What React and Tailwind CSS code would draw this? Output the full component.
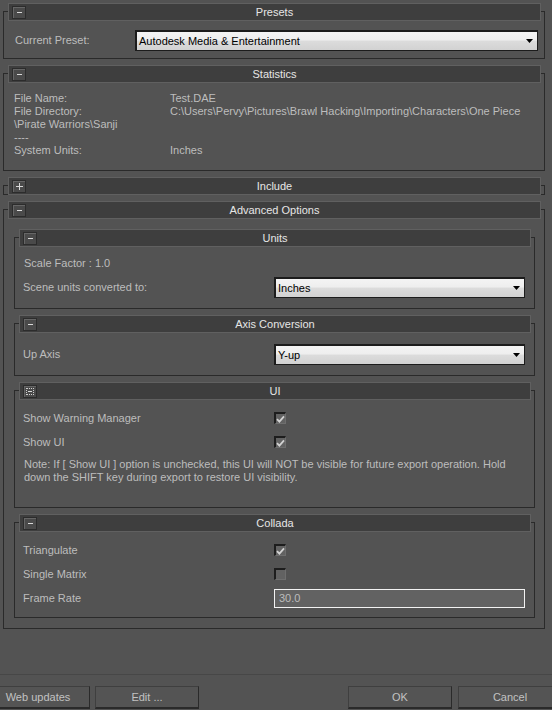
import React from "react";

function HeaderBtn({ kind }) {
  return (
    <div className="ml-[3px] flex h-[13px] w-[14px] shrink-0 items-center justify-center border border-[#2c2c2c] bg-[#4a4a4a] shadow-[inset_1px_1px_0_#666]">
      {kind === "focus" ? (
        <div className="flex h-[7px] w-[8px] items-center justify-center border border-dotted border-[#cfcfcf]">
          <div className="h-px w-[4px] bg-[#d8d8d8]" />
        </div>
      ) : kind === "plus" ? (
        <div className="relative flex h-[7px] w-[7px] items-center justify-center">
          <div className="h-px w-[7px] bg-[#d8d8d8]" />
          <div className="absolute left-[3px] top-0 h-[7px] w-px bg-[#d8d8d8]" />
        </div>
      ) : (
        <div className="h-px w-[5px] bg-[#d8d8d8]" />
      )}
    </div>
  );
}

function Header({ title, kind }) {
  return (
    <div className="-mt-[9px] ml-[4px] mr-[3px] flex h-[18px] items-center border border-[#606060] bg-[#3e3e3e]">
      <HeaderBtn kind={kind} />
      <div className="mr-[17px] flex-1 text-center text-[11px] leading-[13px] text-[#e6e6e6]">
        {title}
      </div>
    </div>
  );
}

function Arrow() {
  return (
    <svg width="7" height="4" viewBox="0 0 7 4" className="mr-[4px] shrink-0">
      <path d="M0 0H7L3.5 4Z" fill="#000" />
    </svg>
  );
}

function Dropdown({ value, w }) {
  return (
    <div
      className={
        "flex h-[21px] shrink-0 items-center justify-between border border-[#1c1c1c] border-t-2 border-l-2 bg-[linear-gradient(to_bottom,#f4f4f4_0%,#eeeeee_45%,#dcdcdc_50%,#d2d2d2_100%)] pl-[2px] text-[11px] text-black " +
        w
      }
    >
      <span>{value}</span>
      <Arrow />
    </div>
  );
}

function Check({ checked }) {
  return (
    <div className="flex h-[12px] w-[12px] shrink-0 items-center justify-center border-t-2 border-l-2 border-r border-b border-t-[#1d1d1d] border-l-[#1d1d1d] border-r-[#6e6e6e] border-b-[#6e6e6e] bg-[#626262]">
      {checked && (
        <svg width="9" height="8" viewBox="0 0 9 8">
          <path d="M1 4.2L3.4 6.6L8 1.4" fill="none" stroke="#d2d2d2" strokeWidth="1.8" />
        </svg>
      )}
    </div>
  );
}

function Row({ label, children }) {
  return (
    <div className="flex h-[24px] items-center">
      <div className="w-[259px] shrink-0 pl-[8px]">{label}</div>
      {children}
    </div>
  );
}

function FooterBtn({ label }) {
  return (
    <div className="flex h-[23px] w-[104px] items-center justify-center border border-t-[#3f3f3f] border-l-[#3f3f3f] border-r-[#2a2a2a] border-b-2 border-b-[#2a2a2a] bg-[#545454] text-[11px] text-[#c2c2c2]">
      {label}
    </div>
  );
}

export default function App() {
  return (
    <div className="flex h-[710px] w-[552px] flex-col overflow-hidden bg-[#535353] font-['Liberation_Sans',Arial,sans-serif] text-[11px] leading-[13px] text-[#bdbdbd]">
      {/* Presets */}
      <div className="ml-[3px] mt-[11px] w-[542px] border border-[#2a2a2a]">
        <Header title="Presets" kind="minus" />
        <div className="flex items-center pt-[9px] pb-[7px]">
          <div className="w-[131px] shrink-0 pl-[11px]">Current Preset:</div>
          <Dropdown value="Autodesk Media & Entertainment" w="w-[403px]" />
        </div>
      </div>

      {/* Statistics */}
      <div className="ml-[3px] mt-[14px] w-[542px] border border-[#2a2a2a]">
        <Header title="Statistics" kind="minus" />
        <div className="grid grid-cols-[166px_1fr] pt-[9px] pb-[13px]">
          <div className="pl-[10px]">File Name:</div>
          <div>Test.DAE</div>
          <div className="pl-[10px]">File Directory:</div>
          <div className="whitespace-nowrap">
            C:\Users\Pervy\Pictures\Brawl Hacking\Importing\Characters\One Piece
          </div>
          <div className="col-span-2 pl-[10px]">\Pirate Warriors\Sanji</div>
          <div className="col-span-2 pl-[10px]">----</div>
          <div className="pl-[10px]">System Units:</div>
          <div>Inches</div>
        </div>
      </div>

      {/* Include (collapsed) */}
      <div className="ml-[3px] mt-[14px] w-[542px] border border-[#2a2a2a]">
        <div className="-mb-px">
          <Header title="Include" kind="plus" />
        </div>
      </div>

      {/* Advanced Options */}
      <div className="ml-[3px] mt-[14px] w-[542px] border border-[#2a2a2a] pb-[10px]">
        <Header title="Advanced Options" kind="minus" />

        {/* Units */}
        <div className="ml-[10px] mt-[18px] w-[521px] border border-[#2a2a2a]">
          <Header title="Units" kind="minus" />
          <div className="pt-[10px] pb-[10px]">
            <div className="pl-[9px]">Scale Factor : 1.0</div>
            <div className="mt-[7px] flex items-center">
              <div className="w-[259px] shrink-0 pl-[8px]">Scene units converted to:</div>
              <Dropdown value="Inches" w="w-[251px]" />
            </div>
          </div>
        </div>

        {/* Axis Conversion */}
        <div className="ml-[10px] mt-[14px] w-[521px] border border-[#2a2a2a]">
          <Header title="Axis Conversion" kind="minus" />
          <div className="flex items-center pt-[11px] pb-[10px]">
            <div className="w-[259px] shrink-0 pl-[8px]">Up Axis</div>
            <Dropdown value="Y-up" w="w-[251px]" />
          </div>
        </div>

        {/* UI */}
        <div className="ml-[10px] mt-[14px] w-[521px] border border-[#2a2a2a]">
          <Header title="UI" kind="focus" />
          <div className="pt-[6px] pb-[23px]">
            <Row label="Show Warning Manager">
              <Check checked />
            </Row>
            <Row label="Show UI">
              <Check checked />
            </Row>
            <div className="mt-[4px] pl-[9px]">
              Note: If [ Show UI ] option is unchecked, this UI will NOT be visible for future export operation. Hold
              <br />
              down the SHIFT key during export to restore UI visibility.
            </div>
          </div>
        </div>

        {/* Collada */}
        <div className="ml-[10px] mt-[14px] w-[521px] border border-[#2a2a2a]">
          <Header title="Collada" kind="minus" />
          <div className="pt-[6px] pb-[7px]">
            <Row label="Triangulate">
              <Check checked />
            </Row>
            <Row label="Single Matrix">
              <Check />
            </Row>
            <Row label="Frame Rate">
              <div className="flex h-[19px] w-[251px] items-center border border-[#f2f2f2] bg-[#626262] pl-[4px] text-[#bcbcbc]">
                30.0
              </div>
            </Row>
          </div>
        </div>
      </div>

      {/* Footer */}
      <div className="mt-auto h-[36px] border-t border-[#474747] pt-[11px]">
        <div className="-ml-[14px] flex w-[576px]">
          <div className="flex gap-[5px]">
            <FooterBtn label="Web updates" />
            <FooterBtn label="Edit ..." />
          </div>
          <div className="ml-auto flex gap-[6px]">
            <FooterBtn label="OK" />
            <FooterBtn label="Cancel" />
          </div>
        </div>
      </div>
    </div>
  );
}
